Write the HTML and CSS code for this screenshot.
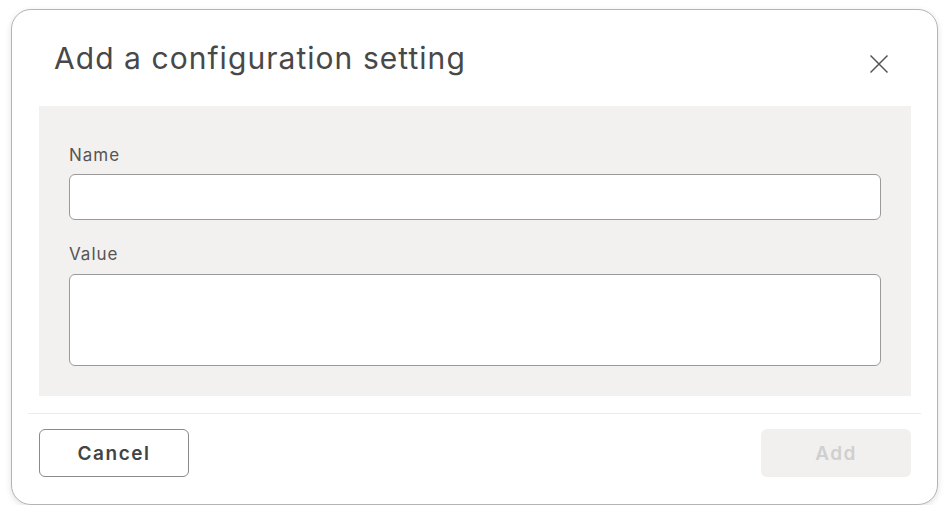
FILE: index.html
```html
<!DOCTYPE html>
<html>
<head>
<meta charset="utf-8">
<link rel="stylesheet" href="styles.css">
</head>
<body>
<div class="dialog">
  <div class="header">
    <h1 class="title">Add a configuration setting</h1>
    <button class="close" aria-label="Close">
      <svg width="20" height="20" viewBox="0 0 20 20"><path d="M1.5 1.5 L18.5 18.5 M18.5 1.5 L1.5 18.5" stroke="#555" stroke-width="1.5" fill="none"/></svg>
    </button>
  </div>
  <div class="body">
    <label class="label">Name</label>
    <div class="input"></div>
    <label class="label label-value">Value</label>
    <div class="input textarea"></div>
  </div>
  <div class="footer">
    <button class="btn btn-cancel">Cancel</button>
    <button class="btn btn-add">Add</button>
  </div>
</div>
</body>
</html>
```
FILE: styles.css
```css
* { box-sizing: border-box; }
body {
  margin: 0;
  background: #fff;
  font-family: Inter, "Open Sans", sans-serif;
}
.dialog {
  margin: 9px 0 0 11px;
  width: 927px;
  height: 496px;
  border: 1px solid #b4b4b4;
  border-radius: 20px;
  box-shadow: 0 2px 6px rgba(0,0,0,0.12);
  padding: 0 16px;
  display: flex;
  flex-direction: column;
  background: #fff;
}
.header {
  height: 96px;
  display: flex;
  align-items: flex-start;
  justify-content: space-between;
  padding: 28px 32px 0 26px;
}
.title {
  margin: 0;
  font-size: 30px;
  line-height: 40px;
  font-weight: 400;
  color: #484848;
  letter-spacing: 1.05px;
}
.close {
  margin-top: 16px;
  border: none;
  background: none;
  padding: 0;
  width: 20px;
  height: 20px;
  display: flex;
}
.close svg { display: block; }
.body {
  margin: 0 10px 0 11px;
  background: #f2f1f0;
  height: 290px;
  padding: 38px 30px 0 30px;
  display: flex;
  flex-direction: column;
}
.label {
  font-size: 17px;
  line-height: 22px;
  color: #555;
  font-weight: 400;
  letter-spacing: 1px;
}
.input {
  margin-top: 8px;
  height: 46px;
  background: #fff;
  border: 1px solid #9a9a9a;
  border-radius: 6px;
}
.label-value { margin-top: 23px; }
.textarea { margin-top: 9px; height: 92px; }
.footer {
  margin-top: 17px;
  border-top: 1px solid #ececec;
  padding: 15px 10px 0 11px;
  display: flex;
  justify-content: space-between;
}
.btn {
  width: 150px;
  height: 48px;
  border-radius: 6px;
  font-family: inherit;
  font-size: 19px;
  font-weight: 600;
  letter-spacing: 1.5px;
}
.btn-cancel {
  background: #fff;
  border: 1px solid #8a8a8a;
  color: #444;
}
.btn-add {
  background: #f1f0ef;
  border: none;
  color: #cfcfcf;
}
```
